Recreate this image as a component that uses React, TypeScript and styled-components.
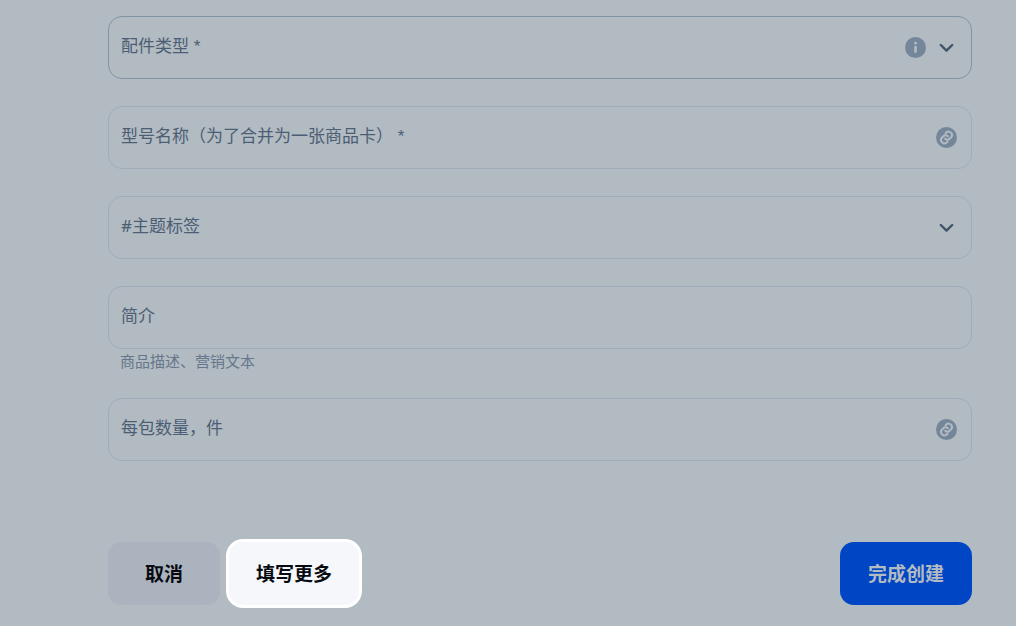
import React from "react";
import styled, { createGlobalStyle } from "styled-components";

const GlobalStyle = createGlobalStyle`
  * { box-sizing: border-box; }
  body {
    margin: 0;
    background: #b2bac2;
    font-family: "Noto Sans", "Noto Sans CJK SC", sans-serif;
  }
`;

const Form = styled.form`
  padding: 16px 44px 21px 108px;
`;

const Fields = styled.div`
  display: flex;
  flex-direction: column;
  gap: 27px;
`;

const Field = styled.div``;

const Box = styled.div<{ $active?: boolean }>`
  display: grid;
  grid-template-columns: minmax(0, 1fr) auto;
  align-items: center;
  height: 63px;
  padding: 0 12px;
  border: 1px solid ${(p) => (p.$active ? "#8193a5" : "#9fadba")};
  border-radius: 14px;
`;

const Label = styled.label`
  grid-area: 1 / 1;
  padding-bottom: 4px;
  font-size: 17px;
  line-height: 24px;
  font-weight: 400;
  color: #4b5e74;
  white-space: pre;
  pointer-events: none;
`;

const RequiredMark = styled.span`
  font-family: "Liberation Sans", sans-serif;
  line-height: 1;
`;

const TextInput = styled.input`
  grid-area: 1 / 1 / 2 / 3;
  width: 100%;
  height: 61px;
  padding: 0;
  border: 0;
  outline: 0;
  background: transparent;
  font: inherit;
  font-size: 17px;
  color: #001a34;
`;

const SelectInput = styled.select`
  grid-area: 1 / 1 / 2 / 3;
  width: 100%;
  height: 61px;
  padding: 0;
  border: 0;
  outline: 0;
  appearance: none;
  background: transparent;
  font: inherit;
  font-size: 17px;
  color: #001a34;
`;

const Icons = styled.div`
  grid-area: 1 / 2;
  display: flex;
  gap: 10px;
  padding-right: 2px;
  pointer-events: none;

  svg { display: block; }
`;

const Hint = styled.p`
  margin: 0;
  padding: 2px 12px 0;
  font-size: 15px;
  line-height: 20px;
  font-weight: 400;
  color: #64778b;
`;

const Actions = styled.div`
  display: flex;
  gap: 9px;
  margin-top: 81px;
`;

const sidePadding = { plain: 37, highlight: 27, primary: 28 };

const Button = styled.button<{ $kind: "plain" | "primary" | "highlight" }>`
  height: 63px;
  padding: 0 ${(p) => sidePadding[p.$kind]}px 2px;
  border: 0;
  border-radius: 14px;
  font-family: inherit;
  font-size: 19px;
  font-weight: 700;
  color: ${(p) => (p.$kind === "primary" ? "#b2bac2" : "#070b11")};
  background: ${(p) =>
    p.$kind === "primary" ? "#0046c4" : p.$kind === "highlight" ? "#f5f7fb" : "#abb3bf"};
  box-shadow: ${(p) => (p.$kind === "highlight" ? "0 0 0 3px #fff" : "none")};
  margin-left: ${(p) => (p.$kind === "primary" ? "auto" : "0")};
`;

const InfoIcon = () => (
  <svg width="21" height="21" viewBox="0 0 21 21" aria-hidden="true">
    <circle cx="10.5" cy="10.5" r="10.5" fill="#74879a" />
    <circle cx="10.5" cy="6.2" r="1.4" fill="#b2bac2" />
    <rect x="9.2" y="8.8" width="2.6" height="7.2" rx="1.3" fill="#b2bac2" />
  </svg>
);

const ChevronIcon = () => (
  <svg width="21" height="21" viewBox="0 0 21 21" aria-hidden="true">
    <path d="M4.8 8l5.7 5.6L16.2 8" fill="none" stroke="#40546a" strokeWidth="2.4" strokeLinecap="round" strokeLinejoin="round" />
  </svg>
);

const LinkIcon = () => (
  <svg width="21" height="21" viewBox="0 0 21 21" aria-hidden="true">
    <circle cx="10.5" cy="10.5" r="10.5" fill="#74879a" />
    <g fill="none" stroke="#b2bac2" strokeWidth="2" strokeLinecap="round">
      <path d="M9.2 11.8a3.1 3.1 0 0 0 4.4 0l1.5-1.5a3.4 3.4 0 0 0-4.8-4.8l-.8.8" />
      <path d="M11.800 9.200a3.100 3.100 0 0 0-4.400 0l-1.500 1.500a3.400 3.400 0 0 0 4.800 4.800l.8-.8" />
    </g>
  </svg>
);

type FieldData = {
  id: string;
  label: string;
  required?: boolean;
  select?: boolean;
  icon?: "info" | "link";
  hint?: string;
};

const fields: FieldData[] = [
  { id: "type", label: "配件类型", required: true, select: true, icon: "info" },
  { id: "model", label: "型号名称（为了合并为一张商品卡）", required: true, icon: "link" },
  { id: "tags", label: "#主题标签", select: true },
  { id: "summary", label: "简介", hint: "商品描述、营销文本" },
  { id: "quantity", label: "每包数量，件", icon: "link" },
];

export default function App() {
  return (
    <>
      <GlobalStyle />
      <Form lang="zh-CN" onSubmit={(e: React.FormEvent) => e.preventDefault()}>
        <Fields>
          {fields.map((f) => (
            <Field key={f.id}>
              <Box $active={f.id === "type"}>
                {f.select ? (
                  <SelectInput id={f.id} required={f.required} defaultValue="">
                    <option value="" />
                  </SelectInput>
                ) : (
                  <TextInput id={f.id} required={f.required} />
                )}
                <Label htmlFor={f.id}>
                  {f.label}
                  {f.required && <RequiredMark>{" *"}</RequiredMark>}
                </Label>
                <Icons>
                  {f.icon === "info" && <InfoIcon />}
                  {f.icon === "link" && <LinkIcon />}
                  {f.select && <ChevronIcon />}
                </Icons>
              </Box>
              {f.hint && <Hint>{f.hint}</Hint>}
            </Field>
          ))}
        </Fields>
        <Actions>
          <Button type="button" $kind="plain">取消</Button>
          <Button type="button" $kind="highlight">填写更多</Button>
          <Button type="submit" $kind="primary">完成创建</Button>
        </Actions>
      </Form>
    </>
  );
}
